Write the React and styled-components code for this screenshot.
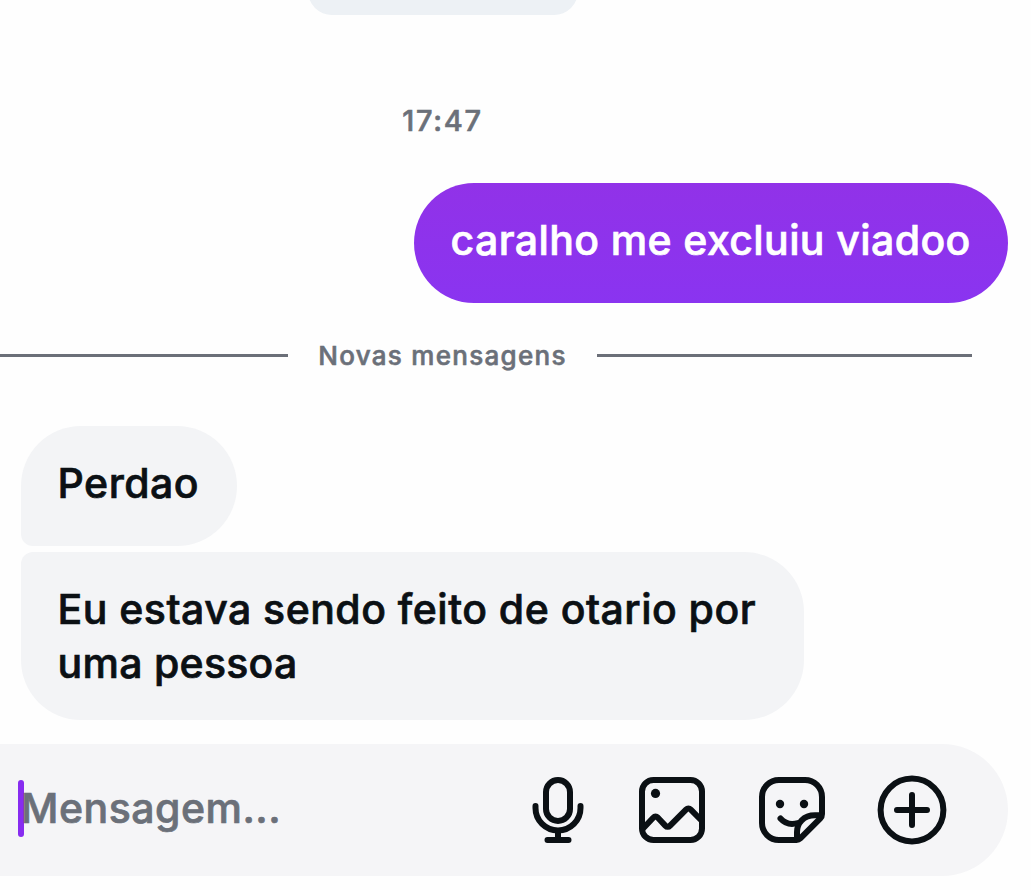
import styled, { createGlobalStyle } from "styled-components";

const GlobalStyle = createGlobalStyle`
  * {
    box-sizing: border-box;
  }

  body {
    margin: 0;
    background: #fff;
    font-family: Inter, "Liberation Sans", sans-serif;
  }
`;

const Screen = styled.div`
  width: 1031px;
  height: 890px;
  overflow: hidden;
  display: flex;
  flex-direction: column;
  background: #fefefe;
`;

const PreviousCard = styled.div`
  width: 270px;
  height: 15px;
  margin-left: 308px;
  overflow: hidden;
  display: flex;
  align-items: flex-end;
  flex-shrink: 0;
`;

const PreviousCardBody = styled.div`
  width: 100%;
  height: 60px;
  flex-shrink: 0;
  border-radius: 24px;
  background: #edf1f5;
`;

const Time = styled.time`
  width: 885px;
  margin-top: 86px;
  height: 40px;
  line-height: 40px;
  text-align: center;
  font-size: 29px;
  font-weight: 500;
  -webkit-text-stroke: 0.6px currentColor;
  letter-spacing: 1.7px;
  color: #6b7079;
`;

const Bubble = styled.div`
  min-height: 120px;
  padding: 30px 36.5px;
  font-size: 41px;
  line-height: 54px;
  font-weight: 500;
  -webkit-text-stroke: 0.7px currentColor;
  white-space: nowrap;
`;

const SentBubble = styled(Bubble)`
  align-self: flex-end;
  width: 594px;
  margin: 42px 23px 0 0;
  border-radius: 60px;
  color: #fff;
  background: linear-gradient(#9132e8, #8a34f0);
`;

const ReceivedBubble = styled(Bubble)`
  width: ${(props) => props.$width};
  border-radius: ${(props) => (props.$last ? "12px 60px 60px 60px" : "60px 60px 60px 12px")};
  color: #0b1014;
  background: #f3f4f6;
`;

const TextLine = styled.div`
  letter-spacing: ${(props) => props.$tracking};
`;

const Divider = styled.div`
  display: flex;
  align-items: center;
  height: 40px;
  margin-top: 33px;
  padding-bottom: 1px;
`;

const Line = styled.div`
  width: ${(props) => props.$width};
  height: 3px;
  background: #6b6f78;
`;

const DividerLabel = styled.span`
  width: 309px;
  text-align: center;
  font-size: 26px;
  line-height: 36px;
  font-weight: 500;
  -webkit-text-stroke: 0.6px currentColor;
  letter-spacing: 1.3px;
  color: #6b7079;
  white-space: nowrap;
`;

const Received = styled.div`
  display: flex;
  flex-direction: column;
  gap: 6px;
  margin: 50px 0 0 21px;
`;

const Composer = styled.div`
  display: flex;
  align-items: center;
  width: 1008px;
  height: 132px;
  margin-top: 24px;
  padding: 0 60px 0 18px;
  border-radius: 0 66px 66px 0;
  background: #f5f5f7;
`;

const Caret = styled.div`
  width: 6px;
  height: 57px;
  margin-bottom: 3px;
  border-radius: 3px;
  background: #872cf0;
`;

const Placeholder = styled.div`
  flex: 1;
  margin: 0 0 4px -3px;
  font-size: 41px;
  line-height: 54px;
  font-weight: 500;
  -webkit-text-stroke: 0.7px currentColor;
  letter-spacing: 0.5px;
  color: #6b7079;
`;

const Actions = styled.div`
  display: flex;
  gap: 48px;
`;

const IconButton = styled.button`
  width: 72px;
  height: 72px;
  padding: 0;
  border: 0;
  background: none;
  color: #0b1014;
  margin-right: ${(props) => props.$pull || "0"};

  svg {
    display: block;
    width: 72px;
    height: 72px;
    fill: none;
    stroke: currentColor;
    stroke-width: 6;
    stroke-linecap: round;
    stroke-linejoin: round;
  }

  .dot {
    fill: currentColor;
    stroke: none;
  }
`;

const MicIcon = () => (
  <svg viewBox="0 0 72 72">
    <rect x="24" y="6" width="24" height="41" rx="12" />
    <path d="M13.5 32v2a22.5 22.5 0 0 0 45 0v-2" />
    <path d="M36 57v9M25.5 66h21" />
  </svg>
);

const PhotoIcon = () => (
  <svg viewBox="0 0 72 72">
    <rect x="6" y="6" width="60" height="60" rx="11.5" />
    <circle className="dot" cx="19.5" cy="19.4" r="4.6" />
    <path d="M7.5 54L17.2 43.8q2.3-2.4 4.7-.1l7.4 7.9q2.4 2.5 4.8 0L50 35.6q2.4-2.4 4.8 0L65 46" />
  </svg>
);

const StickerIcon = () => (
  <svg viewBox="0 0 72 72">
    <path d="M66 40V23A17 17 0 0 0 49 6H23A17 17 0 0 0 6 23v26a17 17 0 0 0 17 17h17.5q2.2 0 3.8-1.6l20-20Q66 42.700 66 40z" />
    <path d="M64.5 41.3H59C47.5 41.3 41 49 41 58v7" />
    <path d="M24.5 44.5C29 49.5 35 51.2 42 49" />
    <circle className="dot" cx="24" cy="30" r="4.2" />
    <circle className="dot" cx="48" cy="30" r="4.2" />
  </svg>
);

const PlusIcon = () => (
  <svg viewBox="0 0 72 72">
    <circle cx="36" cy="36" r="31.4" />
    <path d="M36 21v30M21 36h30" />
  </svg>
);

const App = () => {
  return (
    <>
      <GlobalStyle />
      <Screen>
        <PreviousCard>
          <PreviousCardBody />
        </PreviousCard>
        <Time>17:47</Time>

        <SentBubble>
          <TextLine $tracking="0.4px">caralho me excluiu viadoo</TextLine>
        </SentBubble>

        <Divider>
          <Line $width="288px" />
          <DividerLabel>Novas mensagens</DividerLabel>
          <Line $width="375px" />
        </Divider>

        <Received>
          <ReceivedBubble $width="216px">
            <TextLine $tracking="0.5px">Perdao</TextLine>
          </ReceivedBubble>
          <ReceivedBubble $width="783px" $last>
            <TextLine $tracking="0.48px">Eu estava sendo feito de otario por</TextLine>
            <TextLine $tracking="0.28px">uma pessoa</TextLine>
          </ReceivedBubble>
        </Received>

        {/* message input */}
        <Composer>
          <Caret />
          <Placeholder>Mensagem...</Placeholder>
          <Actions>
            <IconButton aria-label="Microfone" $pull="-6px"><MicIcon /></IconButton>
            <IconButton aria-label="Foto"><PhotoIcon /></IconButton>
            <IconButton aria-label="Figurinha"><StickerIcon /></IconButton>
            <IconButton aria-label="Mais"><PlusIcon /></IconButton>
          </Actions>
        </Composer>
      </Screen>
    </>
  );
};

export default App;
